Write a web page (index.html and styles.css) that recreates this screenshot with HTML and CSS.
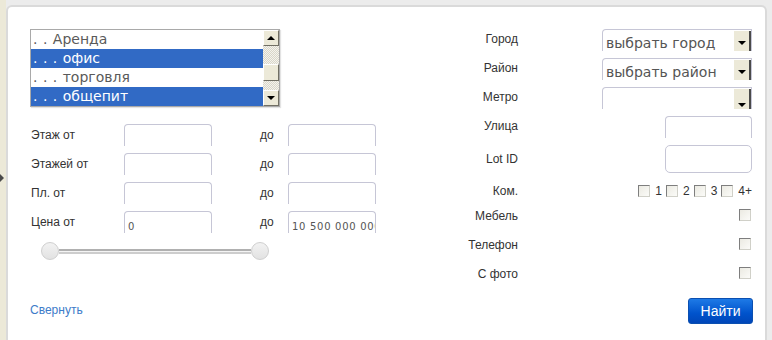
FILE: index.html
```html
<!DOCTYPE html>
<html lang="ru">
<head>
<meta charset="utf-8">
<title>Поиск</title>
<link rel="stylesheet" href="styles.css">
</head>
<body>
<div class="strip"><span class="strip-arrow"></span></div>
<div class="panel">
  <div class="top">
    <div class="left-col">
      <div class="listbox">
        <div class="options">
          <div class="opt">. . Аренда</div>
          <div class="opt sel">. . . офис</div>
          <div class="opt">. . . торговля</div>
          <div class="opt sel">. . . общепит</div>
        </div>
        <div class="scrollbar">
          <div class="sb-btn"><span class="tri-up"></span></div>
          <div class="sb-track"><div class="sb-thumb"></div></div>
          <div class="sb-btn"><span class="tri-down"></span></div>
        </div>
      </div>
      <div class="range-grid">
        <div class="lbl">Этаж от</div><div class="inp"></div><div></div><div class="lbl">до</div><div class="inp"></div>
        <div class="lbl">Этажей от</div><div class="inp"></div><div></div><div class="lbl">до</div><div class="inp"></div>
        <div class="lbl">Пл. от</div><div class="inp"></div><div></div><div class="lbl">до</div><div class="inp"></div>
        <div class="lbl">Цена от</div><div class="inp val">0</div><div></div><div class="lbl">до</div><div class="inp val">10 500 000 000</div>
      </div>
      <div class="slider">
        <span class="knob"></span><span class="track"></span><span class="knob"></span>
      </div>
    </div>
    <div class="right-col">
      <div class="row r-sel"><div class="rl">Город</div><div class="field"><div class="select"><span class="sel-text">выбрать город</span><span class="sel-btn"><span class="tri-down"></span></span></div></div></div>
      <div class="row r-sel"><div class="rl">Район</div><div class="field"><div class="select"><span class="sel-text">выбрать район</span><span class="sel-btn"><span class="tri-down"></span></span></div></div></div>
      <div class="row r-sel"><div class="rl">Метро</div><div class="field"><div class="select"><span class="sel-text"></span><span class="sel-btn low"><span class="tri-down"></span></span></div></div></div>
      <div class="row r-sel"><div class="rl">Улица</div><div class="field"><div class="inp short"></div></div></div>
      <div class="row r-lot"><div class="rl">Lot ID</div><div class="field"><div class="inp short full"></div></div></div>
      <div class="row r-kom"><div class="rl">Ком.</div><div class="field kom">
        <span class="cb"></span><span class="num">1</span>
        <span class="cb"></span><span class="num">2</span>
        <span class="cb"></span><span class="num">3</span>
        <span class="cb"></span><span class="num">4+</span>
      </div></div>
      <div class="row r-cb"><div class="rl">Мебель</div><div class="field"><span class="cb"></span></div></div>
      <div class="row r-cb"><div class="rl">Телефон</div><div class="field"><span class="cb"></span></div></div>
      <div class="row r-cb"><div class="rl">С фото</div><div class="field"><span class="cb"></span></div></div>
    </div>
  </div>
  <div class="footer">
    <a class="collapse" href="#">Свернуть</a>
    <button class="find" type="button">Найти</button>
  </div>
</div>
</body>
</html>
```
FILE: styles.css
```css
* { box-sizing: border-box; }
html, body { margin: 0; height: 340px; overflow: hidden; }
body {
  background: #ececec;
  display: flex;
  font-family: "Liberation Sans", Arial, sans-serif;
  font-size: 12px;
  color: #333;
}
.strip {
  width: 6px;
  flex: none;
  background: #ece9d8;
  padding-top: 174px;
}
.strip-arrow {
  display: block;
  width: 0; height: 0;
  border-top: 4px solid transparent;
  border-bottom: 4px solid transparent;
  border-left: 4px solid #4a4a4a;
}
.panel {
  width: 761px;
  flex: none;
  margin-top: 5px;
  height: 335px;
  background: #fff;
  border: 2px solid #dadada;
  border-bottom: none;
  border-radius: 6px 6px 0 0;
  padding: 22px 13px 0 22px;
}
.top { display: flex; gap: 80px; }
.left-col { width: 350px; }
.listbox {
  width: 250px; height: 78px;
  border: 1px solid #a9a9a9;
  box-shadow: 1px 1px 1px #e3e3e3;
  display: flex;
}
.options { flex: 1; }
.opt {
  height: 19px;
  line-height: 18px;
  padding-left: 2px;
  font-family: "DejaVu Sans", Verdana, sans-serif;
  font-size: 14px;
  color: #5a5a5a;
  white-space: nowrap;
  word-spacing: 1px;
}
.opt.sel { background: #316ac5; color: #fff; }
.scrollbar { width: 16px; display: flex; flex-direction: column; }
.sb-btn {
  height: 16px;
  background: #ece9d8;
  border: 1px solid;
  border-color: #fff #716f64 #716f64 #fff;
  display: flex; align-items: center; justify-content: center;
}
.sb-track {
  flex: 1;
  background: repeating-conic-gradient(#f4f3ee 0 25%, #d9d6c8 0 50%) 0 0 / 2px 2px;
  padding-top: 18px;
}
.sb-thumb {
  height: 17px;
  background: #ece9d8;
  border: 1px solid;
  border-color: #fff #716f64 #716f64 #fff;
}
.tri-up, .tri-down {
  width: 0; height: 0;
  border-left: 4px solid transparent;
  border-right: 4px solid transparent;
}
.tri-up { border-bottom: 4px solid #000; }
.tri-down { border-top: 4px solid #000; }

.range-grid {
  margin-top: 17px;
  display: grid;
  grid-template-columns: 94px 88px 47px 29px 88px;
  grid-auto-rows: 29px;
}
.lbl { padding: 4px 0 0 1px; line-height: 14px; }
.inp {
  height: 22px;
  border: 1px solid #c6c6d6;
  border-bottom: none;
  border-radius: 4px 4px 0 0;
  overflow: hidden;
}
.inp.val {
  font-family: "DejaVu Sans", Verdana, sans-serif;
  font-size: 10px;
  color: #555;
  padding: 9px 0 0 3px;
  white-space: nowrap;
  letter-spacing: 0.7px;
}
.slider {
  margin: 2px 0 0 11px;
  width: 228px;
  display: flex;
  align-items: center;
}
.knob {
  width: 18px; height: 18px;
  border-radius: 50%;
  border: 1px solid #cfcfcf;
  background: linear-gradient(#f2f2f2, #e2e2e2);
  flex: none;
}
.track {
  flex: 1;
  height: 5px;
  border-top: 2px solid #b0b0b0;
  border-bottom: 2px solid #cdcdcd;
  background: #f4f4f4;
}

.right-col { width: 292px; }
.row { display: flex; height: 29px; }
.rl {
  width: 58px;
  text-align: right;
  line-height: 14px;
  flex: none;
}
.field { flex: 1; margin-left: 84px; display: flex; justify-content: flex-end; }
.r-sel .rl { padding-top: 3px; }
.select {
  width: 150px;
  height: 22px;
  border: 1px solid #c6c6d6;
  border-bottom: none;
  border-radius: 4px 0 0 0;
  overflow: hidden;
  display: flex;
}
.sel-text {
  flex: 1;
  font-family: "DejaVu Sans", Verdana, sans-serif;
  font-size: 14px;
  color: #555;
  padding: 5px 0 0 3px;
  line-height: 16px;
  white-space: nowrap;
}
.sel-btn {
  width: 17px;
  height: 21px;
  margin-top: 1px;
  background: #ece9d8;
  border-right: 2px solid #4a4a4a;
  display: flex;
  justify-content: center;
  padding-top: 10px;
}
.sel-btn.low { padding-top: 14px; }
.inp.short { width: 87px; }
.inp.full { height: 28px; border-bottom: 1px solid #c6c6d6; border-radius: 5px; }
.r-lot { height: 35px; }
.r-lot .rl { padding-top: 7px; }
.r-kom { height: 25px; }
.r-kom .rl { padding-top: 4px; }
.kom { align-items: flex-start; padding-top: 5px; }
.cb {
  width: 12px; height: 12px;
  border: 1px solid;
  border-color: #7e7e7e #d0d0c8 #d0d0c8 #7e7e7e;
  background: linear-gradient(135deg, #ebeae2, #fbfbf8);
  flex: none;
  display: block;
}
.num { padding: 0 4px 0 5px; line-height: 12px; font-size: 12px; }
.kom .num:last-child { padding-right: 0; }
.r-cb .rl { padding-top: 4px; }
.r-cb .field { padding-top: 4px; padding-right: 1px; align-items: flex-start; }

.footer {
  margin-top: 6px;
  display: flex;
  justify-content: space-between;
  align-items: center;
}
.collapse {
  color: #3d7cc9;
  text-decoration: none;
  margin-top: -3px;
}
.find {
  width: 65px; height: 26px;
  border: 1px solid #0b4fb0;
  border-radius: 3px;
  background: linear-gradient(#1e7ae6, #0053cc 60%, #0046b8);
  color: #fff;
  font-family: "Liberation Sans", Arial, sans-serif;
  font-size: 14px;
  margin-right: -1px;
  padding: 0;
}
```
